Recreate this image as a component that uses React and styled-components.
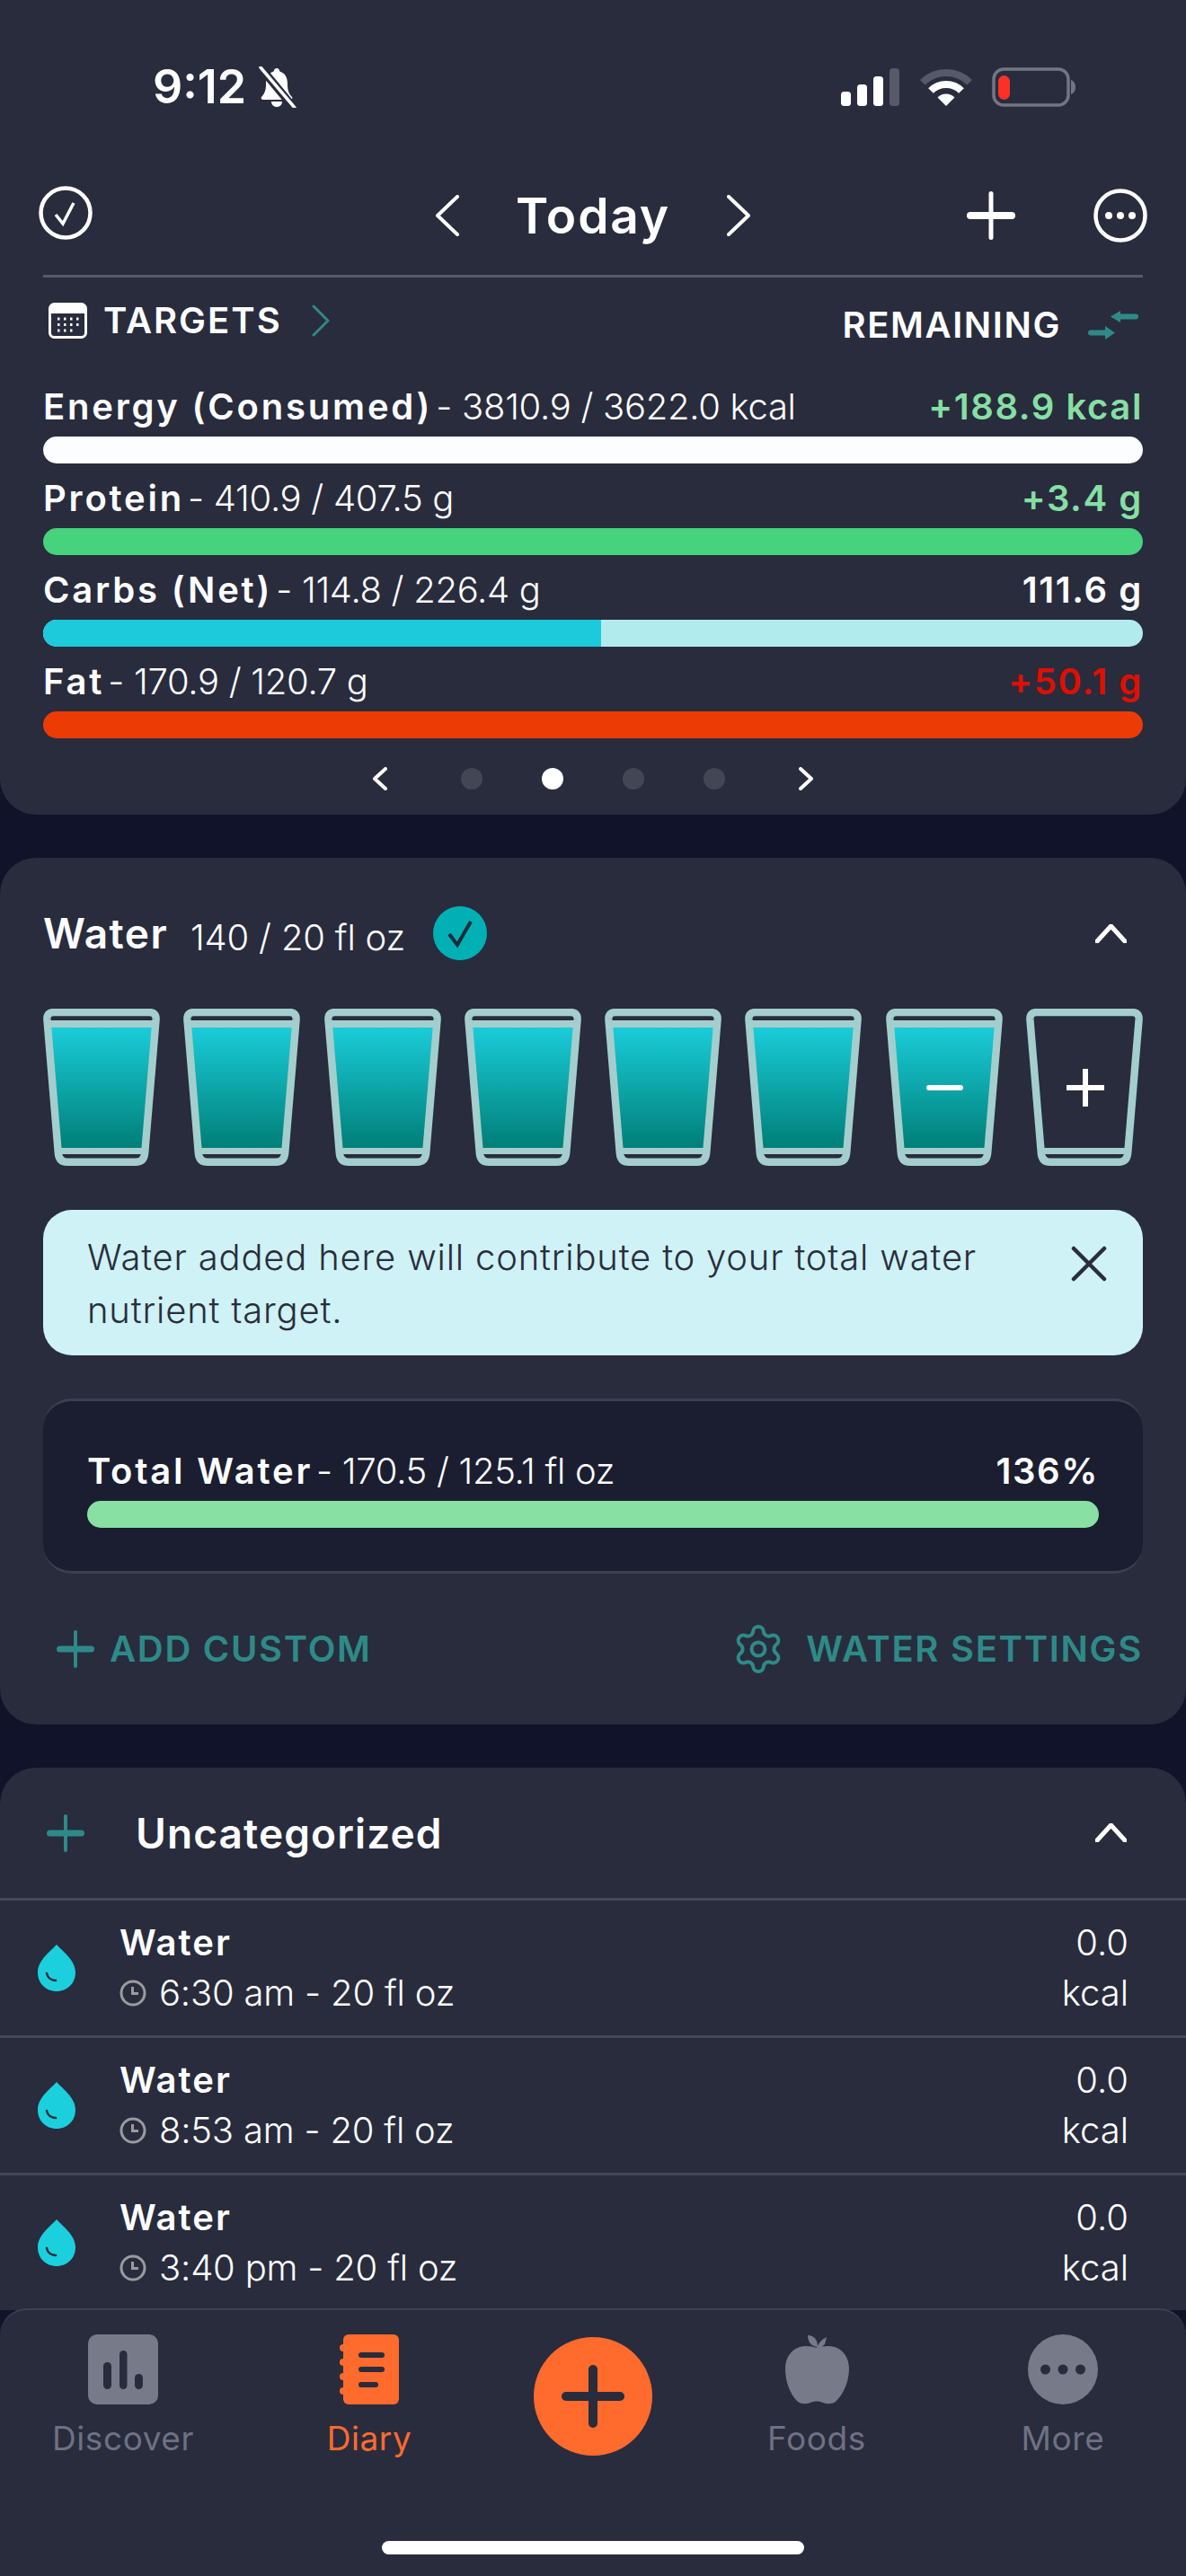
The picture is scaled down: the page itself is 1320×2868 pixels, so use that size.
import React, { useId } from "react";
import styled, { createGlobalStyle } from "styled-components";
import { Settings } from "lucide-react";

const GlobalStyle = createGlobalStyle`
  html, body {
    margin: 0;
    padding: 0;
    background: #10132a;
  }
  body {
    font-family: Inter, "Noto Sans", sans-serif;
    color: #fff;
  }
  * {
    box-sizing: border-box;
  }
`;

const CARD = "#282c3d";
const TEAL = "#2e8a88";

const Page = styled.div`
  position: relative;
  width: 1320px;
  height: 2868px;
  overflow: hidden;
  background: #10132a;
`;

const Card = styled.section`
  background: ${CARD};
  border-radius: 40px;
  margin-top: 48px;
`;

const TopCard = styled(Card)`
  margin-top: 0;
  border-radius: 0 0 40px 40px;
  padding: 64px 0 27px;
`;

// status bar
const StatusBar = styled.div`
  display: flex;
  justify-content: space-between;
  align-items: center;
  height: 66px;
  padding: 0 122px 0 170px;
  margin-bottom: 70px;
`;

const StatusLeft = styled.div`
  display: flex;
  align-items: center;
  gap: 12px;
`;

const StatusRight = styled.div`
  display: flex;
  align-items: center;
  gap: 21px;
`;

const Clock = styled.span`
  font-size: 52px;
  font-weight: 600;
  line-height: 52px;
`;

// top nav
const NavRow = styled.div`
  display: grid;
  grid-template-columns: 1fr auto 1fr;
  align-items: center;
  height: 80px;
  padding: 0 43px;
`;

const NavLeft = styled.div`
  display: flex;
  align-items: center;
  margin-top: -6px;
`;

const NavCenter = styled.div`
  display: flex;
  align-items: center;
  gap: 63px;
`;

const NavRight = styled.div`
  display: flex;
  justify-content: flex-end;
  align-items: center;
  gap: 87px;
`;

const Today = styled.span`
  font-size: 55px;
  font-weight: 600;
  line-height: 66px;
  letter-spacing: 1.8px;
`;

const Divider = styled.div`
  height: 3px;
  background: #565968;
  margin: 26px 48px 0;
`;

const TargetsRow = styled.div`
  display: flex;
  justify-content: space-between;
  align-items: flex-start;
  padding: 20px 53px 0 54px;
  height: 120px;
`;

const TargetsLeft = styled.div`
  display: flex;
  align-items: center;
  height: 56px;
`;

const TargetsRight = styled.div`
  display: flex;
  align-items: center;
  height: 56px;
  margin-top: 5px;
  gap: 30px;
`;

const Caps = styled.span`
  font-size: 40px;
  font-weight: 600;
  line-height: 48px;
  letter-spacing: ${({ $spacing }) => $spacing || "1.7px"};
  color: ${({ $color }) => $color || "#fff"};
`;

const TargetsLabel = styled(Caps)`
  margin: 0 33px 0 18px;
`;

const Metrics = styled.div`
  display: flex;
  flex-direction: column;
  gap: 15px;
  padding: 0 48px;
`;

const Metric = styled.div`
  display: flex;
  flex-direction: column;
  gap: 9px;
`;

const MetricLine = styled.div`
  display: flex;
  justify-content: space-between;
  align-items: baseline;
  line-height: 48px;
  font-size: 40px;
  white-space: nowrap;
`;

const Label = styled.span`
  font-weight: 600;
  letter-spacing: 2.8px;
`;

const Amount = styled.span`
  font-weight: 300;
  letter-spacing: -0.3px;
  margin-left: 4px;
`;

const Remaining = styled.span`
  font-weight: 600;
  letter-spacing: 1.6px;
  color: ${({ $color }) => $color || "#fff"};
`;

const Track = styled.div`
  height: 30px;
  border-radius: 15px;
  overflow: hidden;
  background: ${({ $color }) => $color};
`;

const TrackFill = styled.div`
  height: 100%;
  background: ${({ $color }) => $color};
`;

const Pager = styled.div`
  display: flex;
  justify-content: center;
  align-items: center;
  height: 26px;
  margin-top: 32px;
  gap: 82px;
`;

const Dot = styled.span`
  width: 24px;
  height: 24px;
  border-radius: 50%;
  background: ${({ $active }) => ($active ? "#fff" : "#434655")};
`;

const PagerDots = styled.div`
  display: flex;
  align-items: center;
  gap: 66px;
`;

// water card
const WaterCard = styled(Card)`
  padding: 44px 48px 54px;
`;

const WaterHeader = styled.div`
  display: flex;
  align-items: center;
  height: 80px;
`;

const WaterTitle = styled.span`
  font-size: 46px;
  font-weight: 600;
  letter-spacing: 1.4px;
`;

const WaterAmount = styled.span`
  font-size: 40px;
  font-weight: 300;
  letter-spacing: -0.2px;
  margin: 8px 31px 0 25px;
`;

const Collapse = styled.div`
  margin-left: auto;
  margin-right: 18px;
  display: flex;
`;

const Glasses = styled.div`
  display: flex;
  justify-content: space-between;
  margin-top: 44px;
`;

const InfoBox = styled.div`
  display: flex;
  justify-content: space-between;
  align-items: flex-start;
  height: 162px;
  margin-top: 49px;
  padding: 23px 40px 0 49px;
  border-radius: 32px;
  background: #cef2f6;
  color: #2a2d3b;
  font-size: 40px;
  font-weight: 300;
  line-height: 59px;
  letter-spacing: 0.8px;
`;

const InfoText = styled.p`
  margin: 0;
  width: 1040px;
`;

const CloseWrap = styled.div`
  display: flex;
  margin-top: 17px;
`;

const TotalBox = styled.div`
  display: flex;
  flex-direction: column;
  gap: 9px;
  height: 195px;
  margin-top: 48px;
  padding: 54px 49px 0;
  border-style: solid;
  border-color: #3d3f50;
  border-width: 3px 0;
  border-radius: 32px;
  background: #1b1e30;
`;

const Actions = styled.div`
  display: flex;
  justify-content: space-between;
  align-items: center;
  height: 60px;
  margin-top: 54px;
`;

const ActionGroup = styled.div`
  display: flex;
  align-items: center;
  gap: ${({ $gap }) => $gap}px;
  padding-left: ${({ $inset }) => $inset || 0}px;
`;

// uncategorized card
const ListCard = styled(Card)`
  border-radius: 40px 40px 0 0;
`;

const ListHeader = styled.div`
  display: flex;
  align-items: center;
  height: 145px;
  padding: 0 48px 0 52px;
  gap: 57px;
`;

const ListTitle = styled.span`
  font-size: 46px;
  font-weight: 600;
  letter-spacing: 1.1px;
`;

const Row = styled.div`
  display: flex;
  align-items: center;
  height: 153px;
  padding: 0 64px 0 42px;
  border-top: 3px solid #44475a;
`;

const RowText = styled.div`
  display: flex;
  flex-direction: column;
  gap: 8px;
  margin-left: 49px;
  flex: 1;
`;

const RowRight = styled.div`
  display: flex;
  flex-direction: column;
  align-items: flex-end;
  gap: 8px;
`;

const RowName = styled.span`
  font-size: 40px;
  font-weight: 600;
  line-height: 48px;
  letter-spacing: 2px;
`;

const RowMeta = styled.span`
  display: flex;
  align-items: center;
  gap: 14px;
  font-size: 40px;
  font-weight: 300;
  line-height: 48px;
  letter-spacing: -0.2px;
`;

const RowValue = styled.span`
  font-size: 40px;
  font-weight: 300;
  line-height: 48px;
`;

// bottom tabs, sits over the scrolling list
const TabBar = styled.nav`
  position: absolute;
  left: 0;
  right: 0;
  bottom: 0;
  height: 298px;
  display: flex;
  flex-direction: column;
  background: ${CARD};
  border-top: 2px solid #3d4052;
  border-radius: 30px 30px 0 0;
`;

const Tabs = styled.div`
  display: grid;
  grid-template-columns: 274px 274px 224px 274px 274px;
`;

const Tab = styled.div`
  display: flex;
  flex-direction: column;
  align-items: center;
  padding-top: 27px;
  gap: 16px;
`;

const TabIcon = styled.div`
  display: flex;
  height: 78px;
`;

const TabLabel = styled.span`
  font-size: 37px;
  line-height: 44px;
  font-weight: 400;
  letter-spacing: 0.6px;
  color: ${({ $active }) => ($active ? "#ff6a2d" : "#6e7183")};
`;

const AddButton = styled.div`
  display: flex;
  justify-content: center;
  padding-top: 30px;
`;

const HomeBar = styled.div`
  width: 470px;
  height: 15px;
  border-radius: 8px;
  background: #fff;
  margin: auto auto 24px;
`;

// icons
const BellOff = () => (
  <svg width="44" height="46" viewBox="0 0 44 46">
    <path d="M22 2c2 0 3 1.500 3.400 3.500C32 7.500 34 13 34 20c0 7 2 11 5 14 1 1.500 0 3-2 3H7c-2 0-3-1.500-2-3 3-3 5-7 5-14 0-7 2-12.500 8.600-14.500C19 3.500 20 2 22 2z" fill="#fff" />
    <path d="M16 39h12c0 3.500-2.500 6-6 6s-6-2.500-6-6z" fill="#fff" />
    <path d="M3 0l38 46" stroke={CARD} strokeWidth="9" />
    <path d="M4 1l38 45" stroke="#fff" strokeWidth="3.500" strokeLinecap="round" />
  </svg>
);

const Signal = () => (
  <svg width="66" height="42" viewBox="0 0 66 42">
    <rect x="0" y="26" width="11" height="16" rx="3.500" fill="#fff" />
    <rect x="18" y="18" width="11" height="24" rx="3.500" fill="#fff" />
    <rect x="36" y="9" width="11" height="33" rx="3.500" fill="#fff" />
    <rect x="54" y="0" width="11" height="42" rx="3.500" fill="#565968" />
  </svg>
);

const Wifi = () => (
  <svg width="60" height="46" viewBox="0 0 60 46">
    <path d="M3.800 17.800A37 37 0 0 1 56.200 17.800" fill="none" stroke="#565968" strokeWidth="8" />
    <path d="M13 27A24 24 0 0 1 47 27" fill="none" stroke="#fff" strokeWidth="8" />
    <path d="M30 44L20.500 34.500A13.500 13.500 0 0 1 39.500 34.500Z" fill="#fff" />
  </svg>
);

const Battery = () => (
  <svg width="94" height="44" viewBox="0 0 94 44">
    <rect x="2" y="2" width="83" height="40" rx="11" fill="none" stroke="#727582" strokeWidth="3.500" />
    <rect x="7" y="9" width="13" height="27" rx="6.500" fill="#fb3127" />
    <path d="M88 14c3 1 5 4 5 8s-2 7-5 8z" fill="#727582" />
  </svg>
);

const CheckCircle = () => (
  <svg width="60" height="62" viewBox="0 0 60 62">
    <circle cx="30" cy="31" r="27.500" fill="none" stroke="#fff" strokeWidth="4.500" />
    <path d="M19 33l8 10 12-23" fill="none" stroke="#fff" strokeWidth="3.500" />
  </svg>
);

const Chevron = ({ dir = "right", w = 26, h = 46, color = "#fff", sw = 4 }) => {
  const pts = {
    right: `2,2 ${w - 2},${h / 2} 2,${h - 2}`,
    left: `${w - 2},2 2,${h / 2} ${w - 2},${h - 2}`,
    up: `2,${h - 2} ${w / 2},2 ${w - 2},${h - 2}`,
  };
  return (
    <svg width={w} height={h} viewBox={`0 0 ${w} ${h}`}>
      <polyline points={pts[dir]} fill="none" stroke={color} strokeWidth={sw} strokeLinecap="round" strokeLinejoin="round" />
    </svg>
  );
};

const Plus = ({ size = 54, color = "#fff", sw = 5, bar = 8 }) => (
  <svg width={size} height={size} viewBox={`0 0 ${size} ${size}`}>
    <rect x={size / 2 - sw / 2} y="0" width={sw} height={size} rx={sw / 2} fill={color} />
    <rect x="0" y={size / 2 - bar / 2} width={size} height={bar} rx={bar / 2} fill={color} />
  </svg>
);

const MoreCircle = () => (
  <svg width="60" height="62" viewBox="0 0 60 62">
    <circle cx="30" cy="31" r="27.500" fill="none" stroke="#fff" strokeWidth="4.500" />
    <circle cx="17" cy="31" r="4" fill="#fff" />
    <circle cx="30" cy="31" r="4" fill="#fff" />
    <circle cx="43" cy="31" r="4" fill="#fff" />
  </svg>
);

const CalendarIcon = () => (
  <svg width="43" height="40" viewBox="0 0 43 40">
    <rect x="1.500" y="1.500" width="40" height="37" rx="5" fill={CARD} stroke="#fff" strokeWidth="3" />
    <path d="M1.500 12V6.500a5 5 0 0 1 5-5h30a5 5 0 0 1 5 5V12z" fill="#fff" />
    {[18, 24.500, 31].map((y) =>
      [11, 18, 25, 32].map((x) =>
        y === 31 && x === 32 ? null : <rect key={`${x}-${y}`} x={x - 1} y={y - 1.500} width="2.500" height="3" fill="#fff" />
      )
    )}
  </svg>
);

const SwapIcon = () => (
  <svg width="56" height="33" viewBox="0 0 56 33">
    <path d="M25 6.500L36 0V3.500H53a3 3 0 0 1 0 6H36V13z" fill={TEAL} />
    <path d="M30 24.500L19 17V21.500H3a3 3 0 0 0 0 6H19V32z" fill={TEAL} />
  </svg>
);

const BadgeCheck = () => (
  <svg width="60" height="60" viewBox="0 0 60 60">
    <circle cx="30" cy="30" r="30" fill="#00b0b4" />
    <path d="M18 31l9 12 15-26" fill="none" stroke="#1b2a3a" strokeWidth="4" />
  </svg>
);

const CloseIcon = () => (
  <svg width="40" height="40" viewBox="0 0 40 40">
    <path d="M3 3l34 34M37 3L3 37" stroke="#2a2d3b" strokeWidth="4.500" strokeLinecap="round" />
  </svg>
);

const Glass = ({ filled, mark }) => {
  const id = useId();
  return (
    <svg width="130" height="175" viewBox="0 0 130 175">
      <defs>
        <linearGradient id={id} x1="0" y1="0" x2="0" y2="1">
          <stop offset="0" stopColor="#1accd9" />
          <stop offset="1" stopColor="#007f78" />
        </linearGradient>
      </defs>
      {filled && <polygon points="8.500,21 122,21 111,155 19.500,155" fill={`url(#${id})`} />}
      {filled && <polygon points="4,13 126,13 125.300,21 4.700,21" fill="#a4cecd" />}
      <polygon points="15,155 115,155 114.400,162 15.600,162" fill="#a4cecd" />
      <path
        d="M12 4H118Q126 4 125.600 12L113.200 161Q112.200 170.800 103 170.800H27Q17.800 170.800 16.800 161L4.400 12Q4 4 12 4Z"
        fill="none"
        stroke="#a4cecd"
        strokeWidth="8.400"
      />
      {mark === "minus" && <rect x="45" y="85" width="41" height="6" rx="3" fill="#fff" />}
      {mark === "plus" && (
        <>
          <rect x="45" y="85" width="42" height="6" fill="#fff" />
          <rect x="63" y="67" width="6" height="42" fill="#fff" />
        </>
      )}
    </svg>
  );
};

const Drop = () => (
  <svg width="42" height="52" viewBox="0 0 42 52">
    <path d="M21 0C27 7 42 17 42 31C42 43 33 52 21 52C9 52 0 43 0 31C0 17 15 7 21 0Z" fill="#1ccfdc" />
    <path d="M10 32c1 5 5 8 10 8" fill="none" stroke="#282c3d" strokeWidth="2.500" strokeLinecap="round" />
  </svg>
);

const ClockIcon = () => (
  <svg width="30" height="30" viewBox="0 0 30 30">
    <circle cx="15" cy="15" r="13" fill="none" stroke="#9b9b9d" strokeWidth="3" />
    <path d="M14.500 8v7.500H21" fill="none" stroke="#9b9b9d" strokeWidth="3" />
  </svg>
);

const DiscoverIcon = () => (
  <svg width="78" height="78" viewBox="0 0 78 78">
    <rect width="78" height="78" rx="10" fill="#777a89" />
    <rect x="17" y="31" width="9" height="30" rx="4.500" fill={CARD} />
    <rect x="35" y="18" width="8.500" height="43" rx="4.250" fill={CARD} />
    <rect x="52" y="44" width="9" height="17" rx="4.500" fill={CARD} />
  </svg>
);

const DiaryIcon = () => (
  <svg width="66" height="78" viewBox="0 0 66 78">
    <rect x="4" width="62" height="78" rx="6" fill="#ff6a2d" />
    {[15, 31, 47, 63].map((y) => (
      <circle key={y} cx="4" cy={y} r="4" fill="#ff6a2d" />
    ))}
    <rect x="21" y="20" width="29" height="6" rx="3" fill={CARD} />
    <rect x="21" y="36" width="29" height="6" rx="3" fill={CARD} />
    <rect x="21" y="53" width="22" height="6" rx="3" fill={CARD} />
  </svg>
);

const AppleIcon = () => (
  <svg width="72" height="78" viewBox="0 0 72 78">
    <path d="M36 15C42 13 50 12 56 14C66 17 72 27 72 38C72 52 66 66 58 74C54 78 48 78 43 76C38 74 34 74 29 76C24 78 18 78 14 74C6 66 1 52 1 38C1 27 7 17 17 14C23 12 30 13 36 15Z" fill="#777a89" />
    <path d="M26 1C33 1 37 6 37 14C31 14 26 9 26 1Z" fill="#777a89" />
    <path d="M36 15C38 10 41 6 47 3L45 11L38 17Z" fill="#777a89" />
  </svg>
);

const MoreIcon = () => (
  <svg width="78" height="78" viewBox="0 0 78 78">
    <circle cx="39" cy="39" r="39" fill="#777a89" />
    <circle cx="19.500" cy="39" r="5.500" fill={CARD} />
    <circle cx="39" cy="39" r="5.500" fill={CARD} />
    <circle cx="58.500" cy="39" r="5.500" fill={CARD} />
  </svg>
);

const AddIcon = () => (
  <svg width="132" height="132" viewBox="0 0 132 132">
    <circle cx="66" cy="66" r="66" fill="#ff6a2d" />
    <rect x="31" y="61" width="70" height="10" rx="5" fill={CARD} />
    <rect x="61" y="31" width="10" height="70" rx="5" fill={CARD} />
  </svg>
);

const metrics = [
  { label: "Energy (Consumed)", amount: "- 3810.9 / 3622.0 kcal", rest: "+188.9 kcal", restColor: "#86dfa3", track: "#fbfdff" },
  { label: "Protein", amount: "- 410.9 / 407.5 g", rest: "+3.4 g", restColor: "#86dfa3", track: "#47d27e" },
  { label: "Carbs (Net)", amount: "- 114.8 / 226.4 g", rest: "111.6 g", track: "#b2ebee", fill: "#1ccadc", pct: 50.7 },
  { label: "Fat", amount: "- 170.9 / 120.7 g", rest: "+50.1 g", restColor: "#e00f00", track: "#ec3b04" },
];

const entries = ["6:30 am - 20 fl oz", "8:53 am - 20 fl oz", "3:40 pm - 20 fl oz"];

const App = () => (
  <Page>
    <GlobalStyle />
    <TopCard>
      <StatusBar>
        <StatusLeft>
          <Clock>9:12</Clock>
          <BellOff />
        </StatusLeft>
        <StatusRight>
          <Signal />
          <Wifi />
          <Battery />
        </StatusRight>
      </StatusBar>
      <NavRow>
        <NavLeft>
          <CheckCircle />
        </NavLeft>
        <NavCenter>
          <Chevron dir="left" />
          <Today>Today</Today>
          <Chevron dir="right" />
        </NavCenter>
        <NavRight>
          <Plus />
          <MoreCircle />
        </NavRight>
      </NavRow>
      <Divider />
      <TargetsRow>
        <TargetsLeft>
          <CalendarIcon />
          <TargetsLabel $spacing="2px">TARGETS</TargetsLabel>
          <Chevron w={20} h={36} color={TEAL} sw={3} />
        </TargetsLeft>
        <TargetsRight>
          <Caps $spacing="1.6px">REMAINING</Caps>
          <SwapIcon />
        </TargetsRight>
      </TargetsRow>
      <Metrics>
        {metrics.map((m) => (
          <Metric key={m.label}>
            <MetricLine>
              <span>
                <Label>{m.label}</Label>
                <Amount>{m.amount}</Amount>
              </span>
              <Remaining $color={m.restColor}>{m.rest}</Remaining>
            </MetricLine>
            <Track $color={m.track}>
              {m.fill && <TrackFill $color={m.fill} style={{ width: `${m.pct}%` }} />}
            </Track>
          </Metric>
        ))}
      </Metrics>
      <Pager>
        <Chevron dir="left" w={16} h={26} sw={4} />
        <PagerDots>
          <Dot />
          <Dot $active />
          <Dot />
          <Dot />
        </PagerDots>
        <Chevron dir="right" w={16} h={26} sw={4} />
      </Pager>
    </TopCard>

    <WaterCard>
      <WaterHeader>
        <WaterTitle>Water</WaterTitle>
        <WaterAmount>140 / 20 fl oz</WaterAmount>
        <BadgeCheck />
        <Collapse>
          <Chevron dir="up" w={35} h={21} sw={5} />
        </Collapse>
      </WaterHeader>
      <Glasses>
        {[0, 1, 2, 3, 4, 5].map((i) => (
          <Glass key={i} filled />
        ))}
        <Glass filled mark="minus" />
        <Glass mark="plus" />
      </Glasses>
      <InfoBox>
        <InfoText>Water added here will contribute to your total water nutrient target.</InfoText>
        <CloseWrap>
          <CloseIcon />
        </CloseWrap>
      </InfoBox>
      <TotalBox>
        <MetricLine>
          <span>
            <Label>Total Water</Label>
            <Amount>- 170.5 / 125.1 fl oz</Amount>
          </span>
          <Remaining>136%</Remaining>
        </MetricLine>
        <Track $color="#88e0a3" />
      </TotalBox>
      <Actions>
        <ActionGroup $gap={17} $inset={15}>
          <Plus size={42} color={TEAL} sw={4} bar={7} />
          <Caps $color={TEAL}>ADD CUSTOM</Caps>
        </ActionGroup>
        <ActionGroup $gap={23}>
          <Settings size={60} color={TEAL} strokeWidth={1.6} />
          <Caps $color={TEAL}>WATER SETTINGS</Caps>
        </ActionGroup>
      </Actions>
    </WaterCard>

    <ListCard>
      <ListHeader>
        <Plus size={42} color={TEAL} sw={4} bar={7} />
        <ListTitle>Uncategorized</ListTitle>
        <Collapse>
          <Chevron dir="up" w={35} h={21} sw={5} />
        </Collapse>
      </ListHeader>
      {entries.map((e) => (
        <Row key={e}>
          <Drop />
          <RowText>
            <RowName>Water</RowName>
            <RowMeta>
              <ClockIcon />
              {e}
            </RowMeta>
          </RowText>
          <RowRight>
            <RowValue>0.0</RowValue>
            <RowValue>kcal</RowValue>
          </RowRight>
        </Row>
      ))}
    </ListCard>

    <TabBar>
      <Tabs>
        <Tab>
          <TabIcon>
            <DiscoverIcon />
          </TabIcon>
          <TabLabel>Discover</TabLabel>
        </Tab>
        <Tab>
          <TabIcon>
            <DiaryIcon />
          </TabIcon>
          <TabLabel $active>Diary</TabLabel>
        </Tab>
        <AddButton>
          <AddIcon />
        </AddButton>
        <Tab>
          <TabIcon>
            <AppleIcon />
          </TabIcon>
          <TabLabel>Foods</TabLabel>
        </Tab>
        <Tab>
          <TabIcon>
            <MoreIcon />
          </TabIcon>
          <TabLabel>More</TabLabel>
        </Tab>
      </Tabs>
      <HomeBar />
    </TabBar>
  </Page>
);

export default App;
